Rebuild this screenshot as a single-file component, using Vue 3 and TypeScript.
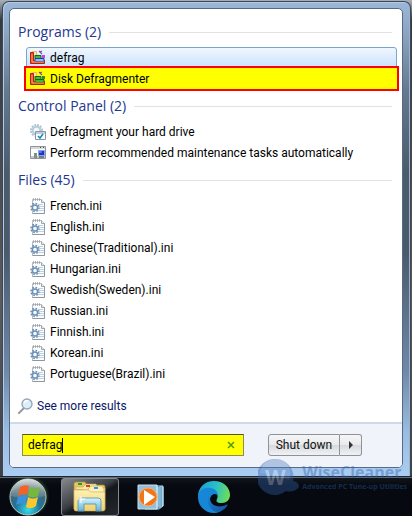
<script setup lang="ts">
import { ref } from 'vue'

type IconName = 'defrag' | 'gear' | 'tasks' | 'ini'
interface Entry { label: string; icon: IconName; state?: 'selected' | 'marked' }
interface Group { title: string; count: number; entries: Entry[] }

const files = ['French', 'English', 'Chinese(Traditional)', 'Hungarian', 'Swedish(Sweden)', 'Russian', 'Finnish', 'Korean', 'Portuguese(Brazil)']

const groups: Group[] = [
  {
    title: 'Programs',
    count: 2,
    entries: [
      { label: 'defrag', icon: 'defrag', state: 'selected' },
      { label: 'Disk Defragmenter', icon: 'defrag', state: 'marked' },
    ],
  },
  {
    title: 'Control Panel',
    count: 2,
    entries: [
      { label: 'Defragment your hard drive', icon: 'gear' },
      { label: 'Perform recommended maintenance tasks automatically', icon: 'tasks' },
    ],
  },
  {
    title: 'Files',
    count: 45,
    entries: files.map((name): Entry => ({ label: `${name}.ini`, icon: 'ini' })),
  },
]

const query = ref('defrag')
</script>

<template>
  <div class="desktop">
    <main class="start-menu">
      <div class="panel">
        <div class="results">
          <section v-for="group in groups" :key="group.title" class="group">
            <h2 class="group-title">{{ group.title }} ({{ group.count }})</h2>
            <ul class="entries">
              <li v-for="entry in group.entries" :key="entry.label">
                <a href="#" class="entry" :class="entry.state">
                  <svg v-if="entry.icon === 'defrag'" class="icon" viewBox="0 0 16 16">
                    <path d="M2.500 1.500h4v4h-4z" fill="#fbe9b4" stroke="#e8bb58" />
                    <path d="M9 1l3 3M12 1l-2 1" stroke="#8b3fc4" stroke-width="1.200" />
                    <path d="M.5 2.500h3v8h11v3H.5z" fill="#e2502a" stroke="#b3200f" />
                    <path d="M5 5.500h6v3H5z" fill="#43b848" stroke="#14671c" />
                    <path d="M5 8.500h9v3H5z" :fill="entry.state === 'marked' ? '#4bb72e' : '#7dc0f8'" :stroke="entry.state === 'marked' ? '#176516' : '#243ba0'" />
                    <path d="M12 5h3v3h-3z" :fill="entry.state === 'marked' ? '#3a8a20' : '#c447df'" />
                    <path d="M2 4v8h12" fill="none" stroke="#ff9a5a" />
                  </svg>
                  <svg v-else-if="entry.icon === 'gear'" class="icon" viewBox="0 0 16 16">
                    <circle cx="6.500" cy="6.500" r="5.500" fill="none" stroke="#a9c0d2" stroke-width="2" stroke-dasharray="1.800 1.080" />
                    <circle cx="6.500" cy="6.500" r="3.800" fill="#f2f8fc" stroke="#b5cddd" stroke-width="2" />
                    <path d="M5.500 7.500h10v8h-10z" fill="#fff" stroke="#8b98a3" />
                    <path d="M6 9h9" stroke="#c2ccd3" stroke-width="2" />
                    <path d="M8 12l2 2 3-4" fill="none" stroke="#1688c5" stroke-width="1.600" />
                  </svg>
                  <svg v-else-if="entry.icon === 'tasks'" class="icon" viewBox="0 0 16 16">
                    <path d="M.5 1.500h15v12H.5z" fill="#fff" stroke="#8d949b" />
                    <path d="M1 3h14" stroke="#d3d9de" stroke-width="2" />
                    <path d="M10 2.500h1M13 2.500h1" stroke="#44505b" />
                    <path d="M1 11h14v2H1z" fill="#c5c9cd" />
                    <path d="M4 8h3v5H4z" fill="#848c92" />
                    <path d="M5 9h1" stroke="#3bb950" stroke-width="2" />
                    <path d="M8.500 5.500h6v5h-6z" fill="#1c35c4" stroke="#8ba3e2" />
                    <path d="M9 6h3v2H9z" fill="#4d77f0" />
                    <path d="M9 12h5" stroke="#737b84" stroke-width="2" />
                  </svg>
                  <svg v-else class="icon" viewBox="0 0 16 16">
                    <path d="M2.500 1.500h9l3 3v11h-12z" fill="#fcfdfe" stroke="#b6bdc4" />
                    <path d="M14.500 4v11.500h-12" fill="none" stroke="#8f979f" />
                    <path d="M11.500 1.500v3h3" fill="#e6eaee" stroke="#9ea5ad" />
                    <path d="M3.500 0v3M5.500 0v3M7.500 0v3M9.500 0v3" stroke="#999" stroke-width=".7" />
                    <path d="M8 6.500h5M10 8.500h4M10 10.500h4M8 12.500h6" stroke="#b9d2e5" />
                    <circle cx="5" cy="9.500" r="4" fill="none" stroke="#6f8dab" stroke-width="1.600" stroke-dasharray="1.600 1.540" />
                    <circle cx="5" cy="9.500" r="2.600" fill="#f5fafd" stroke="#6c91b8" stroke-width="1.500" />
                  </svg>
                  <span>{{ entry.label }}</span>
                </a>
              </li>
            </ul>
          </section>
          <a href="#" class="more">
            <svg class="icon" viewBox="0 0 16 16">
              <path d="M1 15l5-5" stroke="#98999d" stroke-width="2" stroke-linecap="round" />
              <circle cx="9" cy="6" r="5" fill="#d9effb" stroke="#9aa6b5" stroke-width="1.400" />
              <path d="M6 5q1-3 4-2" fill="none" stroke="#fff" stroke-width="1.500" />
            </svg>
            <span>See more results</span>
          </a>
        </div>
        <footer class="footer">
          <div class="search">
            <input v-model="query" class="query" type="text" aria-label="Search programs and files" />
            <span class="caret"></span>
            <button class="clear" type="button" aria-label="Clear search" @click="query = ''">
              <svg viewBox="0 0 8 8"><path d="M1 1l6 6M7 1l-6 6" stroke="#4f9a1c" stroke-width="1.500" /></svg>
            </button>
          </div>
          <div class="power">
            <button type="button" class="shutdown">Shut down</button>
            <button type="button" class="options" aria-label="Shut down options">
              <svg viewBox="0 0 4 8"><path d="M0 0l4 4-4 4z" fill="#333" /></svg>
            </button>
          </div>
        </footer>
      </div>
    </main>

    <nav class="taskbar">
      <button type="button" class="task start" aria-label="Start">
        <svg viewBox="0 0 40 38">
          <defs>
            <radialGradient id="orb" cx=".5" cy=".85" r=".85">
              <stop offset="0" stop-color="#35dcec" />
              <stop offset=".4" stop-color="#21759a" />
              <stop offset=".75" stop-color="#4a6470" />
              <stop offset="1" stop-color="#a0a8aa" />
            </radialGradient>
            <linearGradient id="gloss" x2="0" y2="1">
              <stop offset="0" stop-color="#fff" stop-opacity=".6" />
              <stop offset="1" stop-color="#fff" stop-opacity=".1" />
            </linearGradient>
            <radialGradient id="glow">
              <stop offset=".7" stop-color="#5b9b35" stop-opacity=".6" />
              <stop offset="1" stop-color="#345b1f" stop-opacity="0" />
            </radialGradient>
          </defs>
          <circle cx="21" cy="18" r="21" fill="url(#glow)" />
          <circle cx="20" cy="19" r="18" fill="url(#orb)" stroke="#b1c9cc" />
          <path d="M3 18a17 17 0 0 1 34 0q-16 5-34 0z" fill="url(#gloss)" />
          <path d="M12 9q5-3 9-1l-2 9q-4-2-9 1z" fill="#f26325" />
          <path d="M22 9q4 3 10 0l-2 9q-5 3-10 0z" fill="#76b83b" />
          <path d="M10 19q5-3 9-1l-2 9q-5-3-9 0z" fill="#3c91db" />
          <path d="M20 19q5 3 10 0l-2 9q-5 4-10 1z" fill="#fbc82f" />
        </svg>
      </button>
      <button type="button" class="task explorer" aria-label="Windows Explorer">
        <svg viewBox="0 0 34 32">
          <defs>
            <linearGradient id="folder" x2="0" y2="1">
              <stop offset="0" stop-color="#fff1b4" />
              <stop offset="1" stop-color="#efd16f" />
            </linearGradient>
            <linearGradient id="stand" x2="0" y2="1">
              <stop offset="0" stop-color="#d4f5ff" />
              <stop offset="1" stop-color="#63b0da" />
            </linearGradient>
          </defs>
          <path d="M1 3q0-2 2-2h9l2 3h16q2 0 2 2v22H1z" fill="#e9c766" stroke="#ad8b3e" stroke-width=".7" />
          <path d="M5 2h4v2H5z" fill="#18a521" />
          <path d="M2 8V6h8l3-3h10l2 4h7v4z" fill="#fbe9a6" stroke="#c3a04b" stroke-width=".6" />
          <path d="M13 4h4v2h-4z" fill="#e1381e" />
          <path d="M15 8l3-3h11l2 3v4H15z" fill="#fff0b8" stroke="#c3a04b" stroke-width=".6" />
          <path d="M21 6h4v2h-4z" fill="#299be6" />
          <path d="M1 9h14l3 2h14v17q0 2-2 2H3q-2 0-2-2z" fill="url(#folder)" stroke="#cbaa50" stroke-width=".6" />
          <path d="M5 30V20q0-3 3-3h17q3 0 3 3v10h-5v-7H11v7z" fill="url(#stand)" fill-opacity=".95" stroke="#4b91b9" stroke-width=".8" />
          <path d="M8 15v7M5 18h7" stroke="#fff" />
        </svg>
      </button>
      <button type="button" class="task player" aria-label="Windows Media Player">
        <svg viewBox="0 0 28 28">
          <path d="M8 3h18v20l-4 3H8z" fill="#6aa9d0" stroke="#b4deef" />
          <path d="M5 3h18v22H5z" fill="#7ab9d9" stroke="#356e94" />
          <path d="M1 2h19v24H1z" fill="#94bedb" stroke="#c2e1ef" />
          <path d="M20 2v24M23 3v22M26 4v19" stroke="#d5f2fc" stroke-width=".8" />
          <circle cx="11" cy="14" r="9" fill="#f27518" stroke="#f8ae65" />
          <path d="M7 7l11 7-11 8z" fill="#fff" />
        </svg>
      </button>
      <button type="button" class="task edge" aria-label="Microsoft Edge">
        <svg viewBox="0 0 32 32">
          <defs>
            <linearGradient id="wave" x1="0" y1=".4" x2="1" y2=".6">
              <stop offset="0" stop-color="#219cd9" />
              <stop offset=".5" stop-color="#28bfc8" />
              <stop offset="1" stop-color="#72df52" />
            </linearGradient>
            <linearGradient id="deep" x2="1" y2="1">
              <stop offset="0" stop-color="#1687d2" />
              <stop offset="1" stop-color="#1550a0" />
            </linearGradient>
          </defs>
          <path d="M0 16C0 6 7 0 16 0s16 6 16 14c0 5-4 8-8 8-6 0-6-2-5-4 2-4-1-8-6-8C5 10 0 16 0 16z" fill="url(#wave)" />
          <path d="M0 16c0-6 6-10 12-9 5 0 8 4 8 8-2-4-8-2-8 4 0 7 8 10 17 5-3 5-8 8-13 8C7 32 0 25 0 16z" fill="#1687d7" />
          <path d="M11 14c-4 8 2 17 9 17 4-1 7-3 9-6 1-1 0-2-1-1-9 4-17-1-16-8 0-1 0-2-1-2z" fill="url(#deep)" />
        </svg>
      </button>
    </nav>

    <div class="watermark">
      <svg class="badge" viewBox="0 0 42 36">
        <path d="M18 0a18 18 0 0 1 17 22q6 1 6 6-5 6-13 4a18 18 0 1 1-10-32z" fill="#315da8" />
        <path d="M10 2q8-4 17 1 8 8 4 18Q17 15 2 14q2-9 8-12z" fill="#6d94cf" fill-opacity=".55" />
      </svg>
      <span class="letter">W</span>
      <div class="brand">
        <span class="name">WiseCleaner</span>
        <span class="tagline">Advanced PC Tune-up Utilities</span>
      </div>
    </div>
  </div>
</template>

<style>
body {
  background: #060a10;
}
</style>

<style scoped>
.desktop {
  position: relative;
  box-sizing: border-box;
  min-height: 100vh;
  padding: 1px 1px 0 2px;
  display: flex;
  flex-direction: column;
  font: 12px/20px Roboto, "Open Sans", sans-serif;
  color: #000;
  background: linear-gradient(#a8b0ba, #343a42 20px, #5b5b5b 300px, #353d45);
}
.start-menu {
  flex: 1;
  display: flex;
  flex-direction: column;
  padding: 6px 7px 9px 6px;
  border: 1px solid #3b4756;
  border-bottom: 0;
  border-radius: 7px 7px 0 0;
  background: linear-gradient(#9bb7d9, #8ba5c3 30px, #64798f 90px, #4b5b6b 170px, #4a5a6c 250px, #7089a9 370px, #9abce2 430px, #a9cdf3);
  box-shadow: inset 1px 1px #b7cce2, inset -1px 0 #9eb1c9;
}
.panel {
  flex: 1;
  display: flex;
  flex-direction: column;
  overflow: hidden;
  border: 1px solid #556a83;
  border-radius: 5px;
  background: #fff;
}
.results {
  flex: 1;
  padding: 13px 5px 4px 8px;
}
.group {
  margin-bottom: 7px;
}
.group-title {
  display: flex;
  align-items: center;
  gap: 8px;
  margin: 0 5px 5px 0;
  font-family: "Open Sans", "Noto Sans", sans-serif;
  font-size: 14px;
  font-weight: 400;
  line-height: 20px;
  color: #233890;
}
.group-title::after {
  content: "";
  flex: 1;
  height: 1px;
  background: #e2e2e2;
}
.entries {
  margin: 0;
  padding: 0 0 0 8px;
  list-style: none;
}
.entry {
  display: flex;
  align-items: center;
  gap: 4px;
  box-sizing: border-box;
  height: 21px;
  padding: 0 4px;
  color: #000;
  text-decoration: none;
  white-space: nowrap;
}
.entry.selected {
  padding: 0 3px;
  border: 1px solid #7da2ce;
  border-radius: 3px 3px 0 0;
  background: linear-gradient(#f0f7ff, #cae1fb);
}
.entry.marked {
  height: 25px;
  margin: -2px;
  padding: 0 4px;
  border: 2px solid #f00;
  background: #ff0;
}
.icon {
  flex: none;
  width: 16px;
  height: 16px;
}
.more {
  display: flex;
  align-items: center;
  gap: 3px;
  height: 20px;
  margin-top: 12px;
  color: #0a1668;
  text-decoration: none;
}
.footer {
  display: flex;
  align-items: center;
  gap: 24px;
  padding: 10px 40px 11px 12px;
  border-top: 2px solid #ccdaea;
  background: #f0f4fa;
}
.search {
  flex: 1;
  display: flex;
  align-items: center;
  box-sizing: border-box;
  height: 22px;
  min-width: 0;
  padding: 0 8px 0 5px;
  border: 1px solid #8c8c60;
  border-top-color: #555519;
  background: #ff0;
}
.query {
  field-sizing: content;
  min-width: 0;
  padding: 0;
  border: 0;
  outline: 0;
  font: inherit;
  color: #000;
  background: transparent;
}
.caret {
  width: 1px;
  height: 15px;
  background: #000;
}
.clear {
  display: flex;
  width: 8px;
  height: 8px;
  margin-left: auto;
  padding: 0;
  border: 0;
  background: none;
}
.clear svg {
  width: 8px;
  height: 8px;
}
.power {
  display: flex;
}
.shutdown,
.options {
  display: flex;
  align-items: center;
  justify-content: center;
  box-sizing: border-box;
  height: 22px;
  padding: 0;
  border: 1px solid #8e9399;
  font: inherit;
  color: #111;
  background: linear-gradient(#f6f6f7, #e9eaec 48%, #d5d8dc 50%, #f1f2f4);
}
.shutdown {
  width: 72px;
  border-radius: 3px 0 0 3px;
}
.options {
  width: 22px;
  border-left: 0;
  border-radius: 0 3px 3px 0;
}
.options svg {
  width: 4px;
  height: 8px;
}
.taskbar {
  display: flex;
  align-items: center;
  height: 38px;
  margin: 0 -1px 0 -2px;
  padding-left: 7px;
  border-top: 1px solid #626b75;
  background: linear-gradient(#10151b, #060a10 8px);
  box-shadow: 0 -1px #1c2530;
}
.task {
  display: flex;
  align-items: center;
  justify-content: center;
  padding: 0;
  border: 0;
  background: none;
}
.start svg {
  width: 42px;
  height: 38px;
}
.explorer {
  box-sizing: border-box;
  width: 58px;
  height: 38px;
  margin-left: 12px;
  border: 1px solid #858a90;
  border-radius: 3px;
  background: linear-gradient(150deg, #85888c, #3b3e43 45%, #14181d 55%, #25292e);
}
.explorer svg {
  width: 34px;
  height: 32px;
}
.player {
  margin-left: 18px;
}
.player svg {
  width: 28px;
  height: 28px;
}
.edge {
  margin-left: 33px;
}
.edge svg {
  width: 32px;
  height: 32px;
}
.watermark {
  position: absolute;
  right: 5px;
  bottom: 21px;
  display: flex;
  gap: 2px;
  opacity: 0.4;
  pointer-events: none;
}
.badge {
  width: 42px;
  height: 36px;
}
.letter {
  position: absolute;
  left: 7px;
  top: 8px;
  font-family: "Open Sans", sans-serif;
  font-size: 21px;
  font-weight: 700;
  color: #bdd0ee;
}
.brand {
  display: flex;
  flex-direction: column;
  padding-top: 5px;
  color: #315da8;
  font-family: "Open Sans", sans-serif;
  font-weight: 700;
  white-space: nowrap;
}
.name {
  font-size: 16px;
  line-height: 16px;
}
.tagline {
  font-size: 7px;
  line-height: 14px;
}
</style>
